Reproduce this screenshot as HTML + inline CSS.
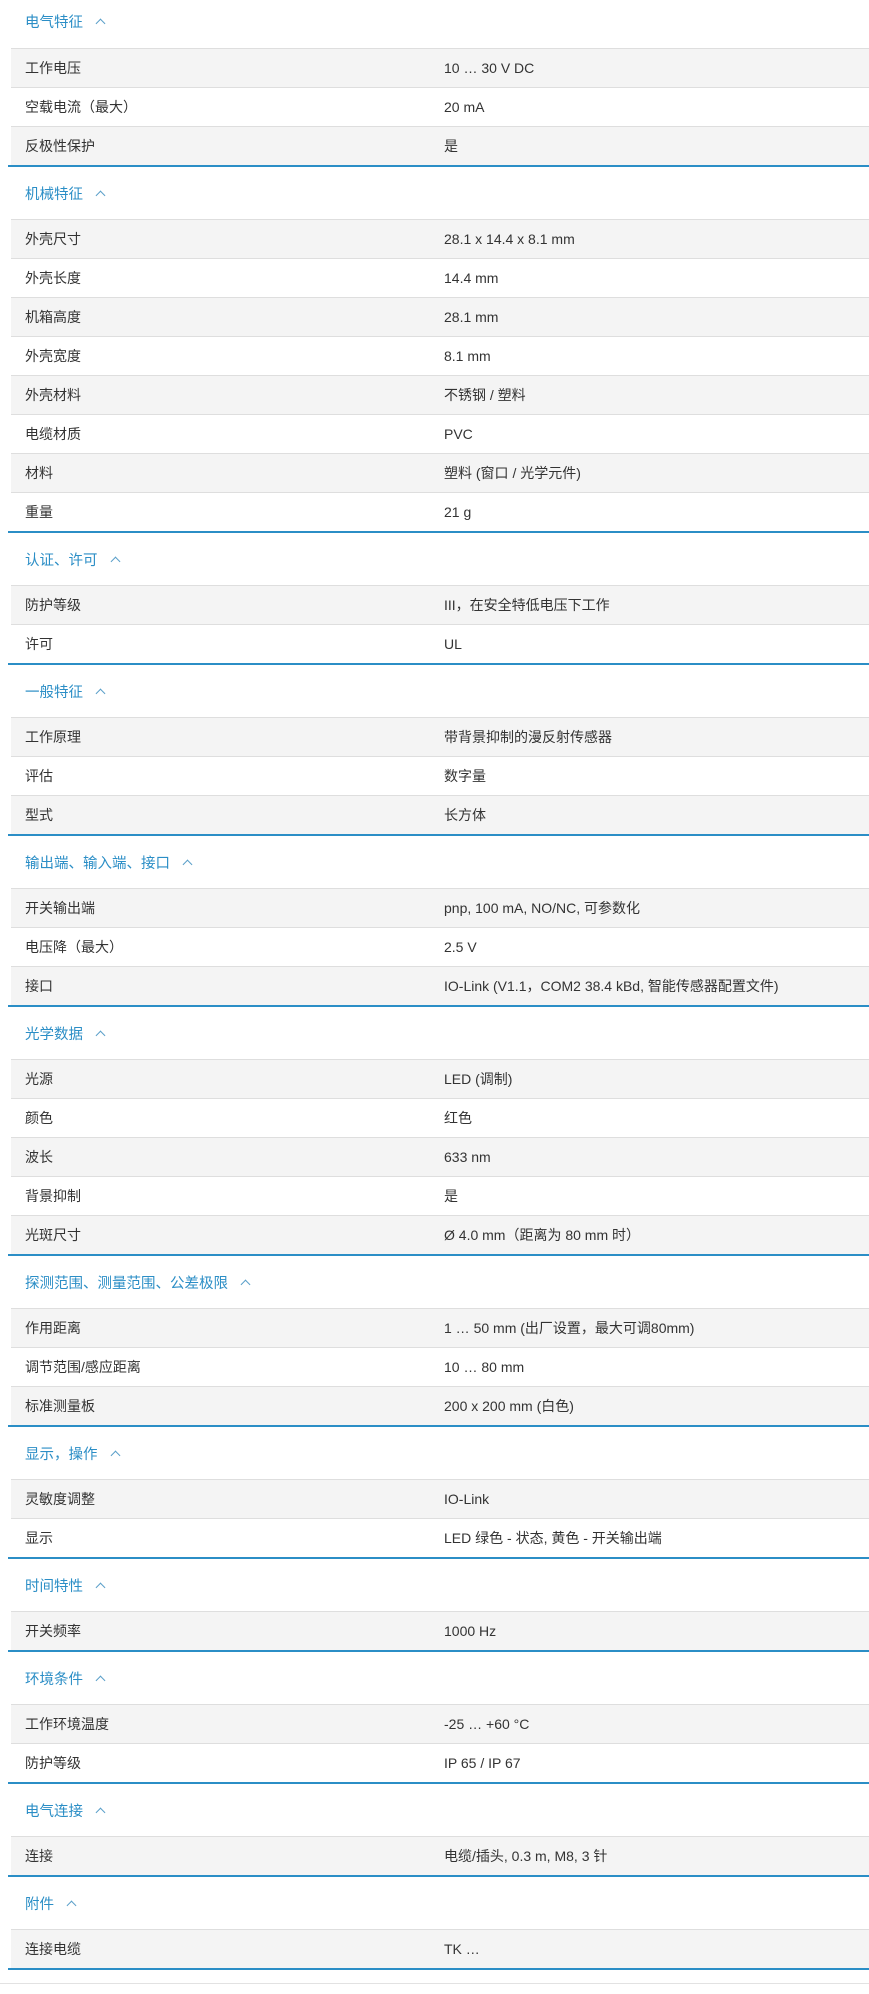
<!DOCTYPE html>
<html><head><meta charset="utf-8"><style>
body{margin:0;background:#fff;font-family:"Liberation Sans","Noto Sans CJK SC",sans-serif;font-size:14px;color:#333;width:869px;height:1994px;overflow:hidden;position:relative}
.sec{border-bottom:2px solid #2b8ec6;margin-left:8px}
.h{height:52px;display:flex;align-items:center;padding-left:17px;color:#2b8ec6;font-size:14.5px;box-sizing:border-box}
.sec.first .h{height:48px;padding-bottom:6px}
.h span{margin-left:14px;display:inline-block;width:6px;height:6px;border-left:1.3px solid #5a9fc9;border-top:1.3px solid #5a9fc9;transform:rotate(45deg);margin-top:4px}
.r{height:39px;box-sizing:border-box;border-top:1px solid #dedede;margin-left:3px;display:flex;align-items:center}
.r:nth-child(even){background:#f4f4f4}
.r .k{width:419px;padding-left:14px}
.r .v{flex:1}
.foot{position:absolute;left:0;right:0;top:1983px;border-top:1px solid #e2e2e2}
</style></head><body>
<div class="sec first"><div class="h">电气特征<span></span></div>
<div class="r"><div class="k">工作电压</div><div class="v">10 … 30 V DC</div></div>
<div class="r"><div class="k">空载电流（最大）</div><div class="v">20 mA</div></div>
<div class="r"><div class="k">反极性保护</div><div class="v">是</div></div></div>
<div class="sec"><div class="h">机械特征<span></span></div>
<div class="r"><div class="k">外壳尺寸</div><div class="v">28.1 x 14.4 x 8.1 mm</div></div>
<div class="r"><div class="k">外壳长度</div><div class="v">14.4 mm</div></div>
<div class="r"><div class="k">机箱高度</div><div class="v">28.1 mm</div></div>
<div class="r"><div class="k">外壳宽度</div><div class="v">8.1 mm</div></div>
<div class="r"><div class="k">外壳材料</div><div class="v">不锈钢 / 塑料</div></div>
<div class="r"><div class="k">电缆材质</div><div class="v">PVC</div></div>
<div class="r"><div class="k">材料</div><div class="v">塑料 (窗口 / 光学元件)</div></div>
<div class="r"><div class="k">重量</div><div class="v">21 g</div></div></div>
<div class="sec"><div class="h">认证、许可<span></span></div>
<div class="r"><div class="k">防护等级</div><div class="v">III，在安全特低电压下工作</div></div>
<div class="r"><div class="k">许可</div><div class="v">UL</div></div></div>
<div class="sec"><div class="h">一般特征<span></span></div>
<div class="r"><div class="k">工作原理</div><div class="v">带背景抑制的漫反射传感器</div></div>
<div class="r"><div class="k">评估</div><div class="v">数字量</div></div>
<div class="r"><div class="k">型式</div><div class="v">长方体</div></div></div>
<div class="sec"><div class="h">输出端、输入端、接口<span></span></div>
<div class="r"><div class="k">开关输出端</div><div class="v">pnp, 100 mA, NO/NC, 可参数化</div></div>
<div class="r"><div class="k">电压降（最大）</div><div class="v">2.5 V</div></div>
<div class="r"><div class="k">接口</div><div class="v">IO-Link (V1.1，COM2 38.4 kBd, 智能传感器配置文件)</div></div></div>
<div class="sec"><div class="h">光学数据<span></span></div>
<div class="r"><div class="k">光源</div><div class="v">LED (调制)</div></div>
<div class="r"><div class="k">颜色</div><div class="v">红色</div></div>
<div class="r"><div class="k">波长</div><div class="v">633 nm</div></div>
<div class="r"><div class="k">背景抑制</div><div class="v">是</div></div>
<div class="r"><div class="k">光斑尺寸</div><div class="v">Ø 4.0 mm（距离为 80 mm 时）</div></div></div>
<div class="sec"><div class="h">探测范围、测量范围、公差极限<span></span></div>
<div class="r"><div class="k">作用距离</div><div class="v">1 … 50 mm (出厂设置，最大可调80mm)</div></div>
<div class="r"><div class="k">调节范围/感应距离</div><div class="v">10 … 80 mm</div></div>
<div class="r"><div class="k">标准测量板</div><div class="v">200 x 200 mm (白色)</div></div></div>
<div class="sec"><div class="h">显示，操作<span></span></div>
<div class="r"><div class="k">灵敏度调整</div><div class="v">IO-Link</div></div>
<div class="r"><div class="k">显示</div><div class="v">LED 绿色 - 状态, 黄色 - 开关输出端</div></div></div>
<div class="sec"><div class="h">时间特性<span></span></div>
<div class="r"><div class="k">开关频率</div><div class="v">1000 Hz</div></div></div>
<div class="sec"><div class="h">环境条件<span></span></div>
<div class="r"><div class="k">工作环境温度</div><div class="v">-25 … +60 °C</div></div>
<div class="r"><div class="k">防护等级</div><div class="v">IP 65 / IP 67</div></div></div>
<div class="sec"><div class="h">电气连接<span></span></div>
<div class="r"><div class="k">连接</div><div class="v">电缆/插头, 0.3 m, M8, 3 针</div></div></div>
<div class="sec"><div class="h">附件<span></span></div>
<div class="r"><div class="k">连接电缆</div><div class="v">TK …</div></div></div>
<div class="foot"></div>
</body></html>
